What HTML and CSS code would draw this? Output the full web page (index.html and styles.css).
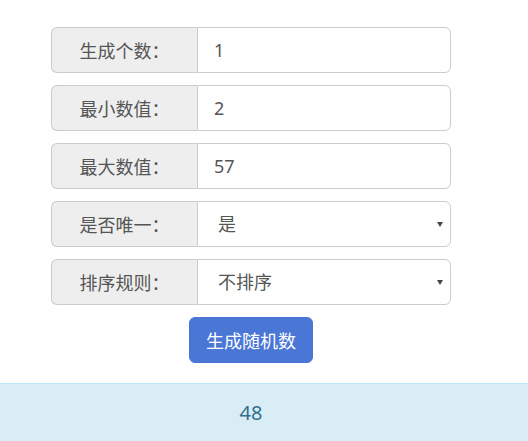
FILE: index.html
```html
<!DOCTYPE html>
<html lang="zh">
<head>
<meta charset="utf-8">
<link rel="stylesheet" href="styles.css">
</head>
<body>
<div class="form">
  <div class="group">
    <span class="addon">生成个数：</span>
    <input class="field" type="text" value="1">
  </div>
  <div class="group">
    <span class="addon">最小数值：</span>
    <input class="field" type="text" value="2">
  </div>
  <div class="group">
    <span class="addon">最大数值：</span>
    <input class="field" type="text" value="57">
  </div>
  <div class="group">
    <span class="addon">是否唯一：</span>
    <div class="select-wrap">
      <select class="field select"><option>是</option><option>否</option></select>
    </div>
  </div>
  <div class="group">
    <span class="addon">排序规则：</span>
    <div class="select-wrap">
      <select class="field select"><option>不排序</option><option>升序</option><option>降序</option></select>
    </div>
  </div>
  <div class="actions">
    <button class="btn" type="button">生成随机数</button>
  </div>
</div>
<div class="result">
  <div class="result-inner">48</div>
</div>
</body>
</html>
```

FILE: styles.css
```css
html, body {
  margin: 0;
  padding: 0;
  background: #fff;
}
body {
  font-family: "Noto Sans", "Noto Sans CJK SC", sans-serif;
  color: #555;
}
.form {
  width: 400px;
  margin: 27px 0 0 51px;
}
.group {
  display: flex;
  height: 46px;
  margin-bottom: 12px;
}
.addon {
  box-sizing: border-box;
  width: 146px;
  flex: 0 0 146px;
  display: flex;
  align-items: center;
  justify-content: center;
  background: #eee;
  border: 1px solid #ccc;
  border-right: 0;
  border-radius: 6px 0 0 6px;
  font-size: 18px;
  color: #555;
}
.field {
  box-sizing: border-box;
  flex: 1;
  width: 100%;
  height: 46px;
  margin: 0;
  border: 1px solid #ccc;
  border-radius: 0 6px 6px 0;
  padding: 0 16px;
  font-family: "Noto Sans", "Noto Sans CJK SC", sans-serif;
  font-size: 18px;
  color: #555;
  background: #fff;
  outline: none;
}
.select-wrap {
  position: relative;
  flex: 1;
  display: flex;
}
.select {
  -webkit-appearance: none;
  appearance: none;
  padding: 0 18px 0 20px;
}
.select-wrap::after {
  content: "";
  position: absolute;
  right: 8px;
  top: 21px;
  border-left: 3px solid transparent;
  border-right: 3px solid transparent;
  border-top: 5px solid #444;
  pointer-events: none;
}
.actions {
  display: flex;
  justify-content: center;
}
.btn {
  box-sizing: border-box;
  height: 46px;
  padding: 0 16px;
  border: 1px solid #4a76d6;
  border-radius: 6px;
  background: #4a76d6;
  color: #fff;
  font-family: "Noto Sans", "Noto Sans CJK SC", sans-serif;
  font-size: 18px;
}
.result {
  margin-top: 20px;
  background: #d9edf7;
  border-top: 1px solid #bce8f1;
  height: 57px;
}
.result-inner {
  width: 400px;
  margin-left: 51px;
  text-align: center;
  font-size: 20px;
  line-height: 24px;
  padding-top: 17px;
  color: #31708f;
}
```
